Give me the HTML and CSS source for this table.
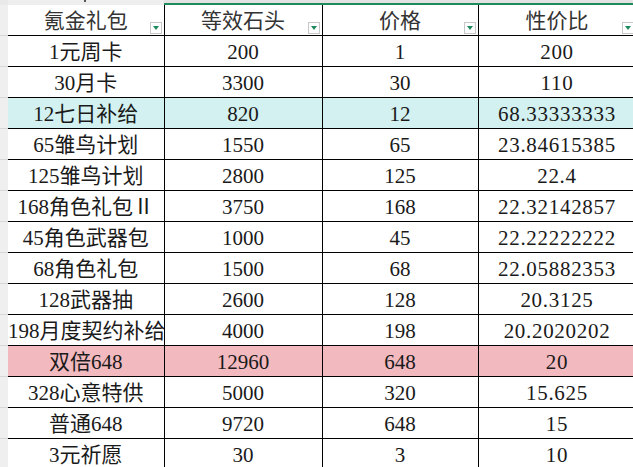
FILE: index.html
```html
<!DOCTYPE html>
<html lang="zh">
<head>
<meta charset="utf-8">
<link rel="stylesheet" href="styles.css">
</head>
<body>
<div class="sheet">
  <div class="colhead">
    <div class="ch ch-a"><span class="tick"></span></div>
    <div class="ch ch-sel"></div>
    <div class="ch ch-sel"></div>
    <div class="ch ch-sel ch-last"></div>
  </div>
  <div class="body">
    <div class="rowhead">
      <div class="rh rh-first"></div>
      <div class="rh"></div><div class="rh"></div><div class="rh"></div><div class="rh"></div>
      <div class="rh"></div><div class="rh"></div><div class="rh"></div><div class="rh"></div>
      <div class="rh"></div><div class="rh"></div><div class="rh"></div><div class="rh"></div>
      <div class="rh"></div><div class="rh rh-last"></div>
    </div>
    <div class="gridwrap">
    <table class="grid">
      <colgroup>
        <col class="c-a"><col class="c-b"><col class="c-c"><col class="c-d">
      </colgroup>
      <thead>
        <tr>
          <th>氪金礼包<span class="filter"></span></th>
          <th>等效石头<span class="filter"></span></th>
          <th>价格<span class="filter"></span></th>
          <th>性价比<span class="filter"></span></th>
        </tr>
      </thead>
      <tbody>
        <tr><td>1元周卡</td><td>200</td><td>1</td><td>200</td></tr>
        <tr><td>30月卡</td><td>3300</td><td>30</td><td>110</td></tr>
        <tr class="cyan"><td>12七日补给</td><td>820</td><td>12</td><td>68.33333333</td></tr>
        <tr><td>65雏鸟计划</td><td>1550</td><td>65</td><td>23.84615385</td></tr>
        <tr><td>125雏鸟计划</td><td>2800</td><td>125</td><td>22.4</td></tr>
        <tr><td>168角色礼包Ⅱ</td><td>3750</td><td>168</td><td>22.32142857</td></tr>
        <tr><td>45角色武器包</td><td>1000</td><td>45</td><td>22.22222222</td></tr>
        <tr><td>68角色礼包</td><td>1500</td><td>68</td><td>22.05882353</td></tr>
        <tr><td>128武器抽</td><td>2600</td><td>128</td><td>20.3125</td></tr>
        <tr><td>198月度契约补给</td><td>4000</td><td>198</td><td>20.2020202</td></tr>
        <tr class="pink"><td>双倍648</td><td>12960</td><td>648</td><td>20</td></tr>
        <tr><td>328心意特供</td><td>5000</td><td>320</td><td>15.625</td></tr>
        <tr><td>普通648</td><td>9720</td><td>648</td><td>15</td></tr>
        <tr><td>3元祈愿</td><td>30</td><td>3</td><td>10</td></tr>
      </tbody>
    </table>
    </div>
  </div>
</div>
</body>
</html>
```
FILE: styles.css
```css
html, body {
  margin: 0;
  padding: 0;
  background: #ffffff;
  overflow: hidden;
}
.sheet {
  width: 633px;
  height: 467px;
  overflow: hidden;
  position: relative;
}
.colhead {
  display: flex;
  height: 5px;
  background: #e9e9e9;
}
.ch {
  height: 5px;
  box-sizing: border-box;
  position: relative;
}
.ch-a {
  width: 164px;
  border-left: 8px solid #e9e9e9;
  background: #eeeeee;
}
.tick {
  position: absolute;
  left: 76px;
  top: 0;
  width: 2px;
  height: 2px;
  background: #555;
}
.ch-sel {
  width: 158px;
  background: #e2e2e2;
  border-bottom: 2px solid #1e8a5c;
}
.ch-sel + .ch-sel { width: 156px; }
.ch-last { flex: 1; border-top-right-radius: 4px; }
.body {
  display: flex;
}
.rowhead {
  width: 8px;
  flex: none;
  background: #efefef;
  display: flex;
  flex-direction: column;
}
.rh {
  height: 31px;
  box-sizing: border-box;
  border-bottom: 1px solid #d8d8d8;
  flex: none;
}
.rh-first { border-top-left-radius: 5px; }
.gridwrap {
  flex: none;
  width: 628px;
}
.grid {
  border-collapse: collapse;
  table-layout: fixed;
  width: 628px;
  font-family: "Liberation Serif", "Noto Sans CJK SC", serif;
  font-size: 21px;
  color: #1a1a1a;
}
.c-a { width: 156px; }
.c-b { width: 158px; }
.c-c { width: 156px; }
.c-d { width: 158px; }
.grid th, .grid td {
  height: 28px;
  padding: 2px 0 0;
  text-align: center;
  vertical-align: middle;
  border: 1px solid #000;
  line-height: 28px;
  white-space: nowrap;
  overflow: hidden;
}
.grid tr > :first-child { border-left: 0; }
.grid thead th {
  border-top: 0;
  font-weight: normal;
  color: #333;
  position: relative;
  padding-top: 1px;
  height: 29px;
}
.grid td:last-child {
  letter-spacing: 0.7px;
}
.filter {
  position: absolute;
  right: 2px;
  bottom: 1px;
  width: 12px;
  height: 12px;
  box-sizing: border-box;
  border: 1px solid #c8c8c8;
  background: #fff;
}
.filter::after {
  content: "";
  position: absolute;
  left: 2px;
  top: 3px;
  border-left: 3px solid transparent;
  border-right: 3px solid transparent;
  border-top: 4px solid #1e8a5c;
}
.cyan td { background: #d2f1f0; }
.pink td { background: #f2b9bf; }
```
